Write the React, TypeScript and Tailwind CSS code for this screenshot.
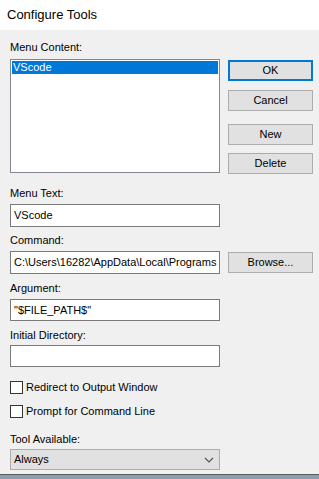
const font = "font-['Liberation_Sans',Arial,sans-serif]";

function Label({ text, className = "" }: { text: string; className?: string }) {
  return <div className={`h-[14px] text-[11px] leading-[14px] text-black ${className}`}>{text}</div>;
}

function TextBox({ value, className = "" }: { value: string; className?: string }) {
  return (
    <div
      className={`flex w-[210px] shrink-0 items-center overflow-hidden whitespace-nowrap border border-[#7a7a7a] bg-white px-[3px] text-[11px] text-black ${className}`}
    >
      {value}
    </div>
  );
}

function Button({ label, primary = false, className = "" }: { label: string; primary?: boolean; className?: string }) {
  return (
    <div
      className={`flex h-[21px] w-[85px] shrink-0 items-center justify-center bg-[#e1e1e1] text-[11px] text-black ${
        primary ? "border-2 border-[#0078d7]" : "border border-[#adadad]"
      } ${className}`}
    >
      {label}
    </div>
  );
}

function CheckRow({ label, className = "" }: { label: string; className?: string }) {
  return (
    <div className={`flex h-[13px] items-center gap-[3px] ${className}`}>
      <div className="h-[13px] w-[13px] border border-[#333333] bg-white" />
      <span className="text-[11px] leading-[13px] text-black">{label}</span>
    </div>
  );
}

export default function App() {
  return (
    <div className={`flex h-[479px] w-[319px] flex-col ${font}`}>
      <div className="flex h-[30px] items-center bg-white pl-[7px] text-[13px] text-black">Configure Tools</div>

      <div className="flex flex-1 flex-col bg-[#f0f0f0] pl-[10px] pr-[6px]">
        <div className="flex gap-[8px]">
          <div className="flex w-[210px] shrink-0 flex-col">
            <Label text="Menu Content:" className="mt-[10px]" />
            <div className="mt-[5px] h-[114px] border border-[#828790] bg-white p-[1px]">
              <div className="flex h-[13px] items-center bg-[#0078d7] pl-[1px] text-[11px] text-white">VScode</div>
            </div>
          </div>
          <div className="flex flex-col">
            <Button label="OK" primary className="mt-[30px]" />
            <Button label="Cancel" className="mt-[9px]" />
            <Button label="New" className="mt-[13px]" />
            <Button label="Delete" className="mt-[8px]" />
          </div>
        </div>

        <Label text="Menu Text:" className="mt-[12px]" />
        <TextBox value="VScode" className="mt-[4px] h-[23px]" />

        <Label text="Command:" className="mt-[6px]" />
        <div className="mt-[4px] flex items-center gap-[8px]">
          <TextBox value="C:\Users\16282\AppData\Local\Programs" className="h-[23px]" />
          <Button label="Browse..." />
        </div>

        <Label text="Argument:" className="mt-[7px]" />
        <TextBox value={'"$FILE_PATH$"'} className="mt-[4px] h-[22px]" />

        <Label text="Initial Directory:" className="mt-[7px]" />
        <TextBox value="" className="mt-[3px] h-[22px]" />

        <CheckRow label="Redirect to Output Window" className="mt-[14px]" />
        <CheckRow label="Prompt for Command Line" className="mt-[11px]" />

        <Label text="Tool Available:" className="mt-[14px]" />
        <div className="mt-[3px] flex h-[21px] w-[210px] items-center justify-between border border-[#adadad] bg-[#e1e1e1] pl-[3px] pr-[5px] text-[11px] text-black">
          <span>Always</span>
          <svg width="10" height="6" viewBox="0 0 10 6" className="mt-[1px]">
            <path d="M1 1 L5 5 L9 1" fill="none" stroke="#555555" strokeWidth="1.2" />
          </svg>
        </div>
      </div>

      <div className="h-[1px] bg-[#595959]" />
      <div className="h-[4px] bg-[#8f9eae]" />
    </div>
  );
}
